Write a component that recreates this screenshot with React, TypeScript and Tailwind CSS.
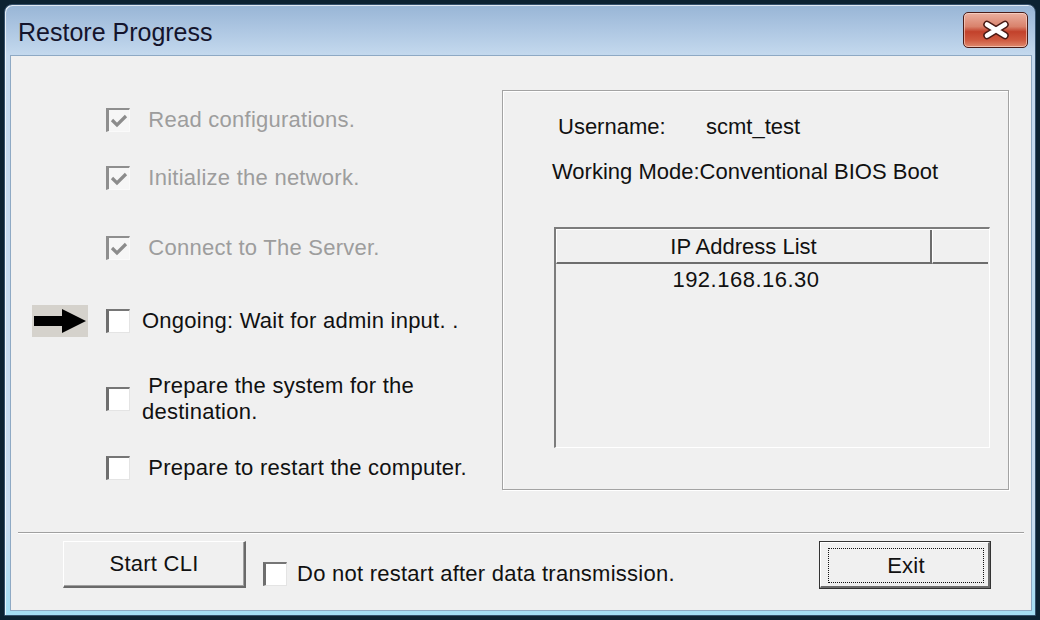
import React from "react";

type BoxProps = { checked?: boolean; disabled?: boolean };

// classic sunken checkbox
const CheckBox: React.FC<BoxProps> = ({ checked, disabled }) => (
  <span
    className={
      disabled
        ? "w-[24px] h-[24px] shrink-0 flex items-center justify-center border-t-2 border-l-[3px] border-r border-b border-t-[#8e8e8e] border-l-[#8e8e8e] border-r-[#fafafa] border-b-[#fafafa] bg-[#f6f6f6]"
        : "w-[24px] h-[24px] shrink-0 flex items-center justify-center border-t-2 border-l-[3px] border-r border-b border-t-[#767676] border-l-[#6e6e6e] border-r-[#e4e4e4] border-b-[#e4e4e4] bg-white"
    }
  >
    {checked && (
      <svg width="18" height="16" viewBox="0 0 18 16">
        <path
          d="M2 7 L7 12 L16 3"
          fill="none"
          stroke={disabled ? "#8c8c8c" : "#222"}
          strokeWidth="3.2"
        />
      </svg>
    )}
  </span>
);

type StepProps = {
  label: string;
  done?: boolean;
};

const Step: React.FC<StepProps> = ({ label, done }) => (
  <div className="flex items-center h-[24px] pl-[95px] gap-[12px]">
    <CheckBox checked={done} disabled={done} />
    <span
      className={
        done
          ? "whitespace-pre text-[22px] leading-[26px] text-[#9d9d9d]"
          : "whitespace-pre text-[22px] leading-[26px] text-[#111]"
      }
    >
      {label}
    </span>
  </div>
);

const CloseButton = () => (
  <div className="self-start mt-[3px] mr-[7px] w-[65px] h-[36px] rounded-[5px] border border-[#4b1d18] bg-[linear-gradient(to_bottom,#eab0a0_0%,#d9826c_40%,#c2412b_55%,#cf5a40_80%,#e08a6e_100%)] shadow-[inset_0_0_0_1px_rgba(255,230,220,0.55)] flex items-center justify-center">
    <svg width="30" height="20" viewBox="0 0 30 20">
      <path d="M6 4.5 L24 15.5 M24 4.5 L6 15.5" stroke="#4a1a14" strokeWidth="7.5" strokeLinecap="round" />
      <path d="M6 4.5 L24 15.5 M24 4.5 L6 15.5" stroke="#ffffff" strokeWidth="4.6" strokeLinecap="round" />
    </svg>
  </div>
);

export default function App() {
  return (
    <div className="w-[1040px] h-[620px] bg-[#0c2232] pl-[4px] pr-[4px] pt-[4px] pb-[4px] font-['Liberation_Sans',Arial,sans-serif]">
      <div className="h-full flex flex-col rounded-t-[8px] border border-[#34506b] bg-[linear-gradient(to_bottom,#98b5d6_0px,#c4d9ee_50px,#c8dcf0_85%,#a4def4_100%)] shadow-[inset_1px_1px_0_rgba(255,255,255,0.7)]">
        {/* title bar */}
        <div className="h-[50px] shrink-0 flex items-center justify-between pt-[4px] pl-[13px]">
          <span className="text-[25px] leading-[30px] text-[#14142c]">Restore Progress</span>
          <CloseButton />
        </div>

        {/* client area */}
        <div className="flex-1 flex flex-col ml-[5px] mr-[3px] mb-[4px] border border-[#8ea9c4] bg-[#f0f0f0] tracking-[0.25px]">
          <div className="flex">
            {/* progress steps */}
            <div className="w-[491px] shrink-0 flex flex-col pt-[52px]">
              <Step label=" Read configurations." done />
              <div className="mt-[34px]">
                <Step label=" Initialize the network." done />
              </div>
              <div className="mt-[46px]">
                <Step label=" Connect to The Server." done />
              </div>
              <div className="mt-[45px] h-[32px] flex items-center pl-[21px]">
                <div className="w-[56px] h-[32px] bg-[#d5d2cc] flex items-center justify-center">
                  <svg width="56" height="32" viewBox="0 0 56 32">
                    <path d="M2 11 H30 V4 L54 16 L30 28 V21 H2 Z" fill="#000" />
                  </svg>
                </div>
                <div className="ml-[18px] flex items-center gap-[12px]">
                  <CheckBox />
                  <span className="whitespace-pre text-[22px] leading-[26px] text-[#111]">
                    Ongoing: Wait for admin input. .
                  </span>
                </div>
              </div>
              <div className="mt-[36px] h-[52px] flex items-center pl-[95px] gap-[12px]">
                <CheckBox />
                <div className="flex flex-col text-[22px] leading-[26px] text-[#111]">
                  <span className="whitespace-pre"> Prepare the system for the</span>
                  <span>destination.</span>
                </div>
              </div>
              <div className="mt-[31px]">
                <Step label=" Prepare to restart the computer." />
              </div>
            </div>

            {/* session info group */}
            <div className="mt-[34px] w-[507px] h-[400px] shrink-0 flex flex-col border border-[#a3a3a3] shadow-[inset_1px_1px_0_#fff,1px_1px_0_#fff] pt-[23px] pl-[49px] text-[22px] leading-[26px] tracking-normal text-[#111]">
              <div className="flex pl-[6px]">
                <span className="w-[148px]">Username:</span>
                <span>scmt_test</span>
              </div>
              <div className="mt-[19px]">Working Mode:Conventional BIOS Boot</div>

              <div className="mt-[42px] ml-[2px] w-[436px] h-[221px] flex flex-col border-t-2 border-l-2 border-r border-b border-t-[#7c7c7c] border-l-[#7c7c7c] border-r-white border-b-white">
                <div className="flex h-[35px] shrink-0 border-t border-white">
                  <div className="w-[376px] pt-[1px] flex items-center justify-center border-l border-white border-r-2 border-r-[#6d6d6d] border-b-2 border-b-[#6d6d6d]">
                    IP Address List
                  </div>
                  <div className="w-[56px] border-l border-white border-b-2 border-b-[#6d6d6d]" />
                </div>
                <div className="w-[376px] mt-[3px] pl-[4px] text-center tracking-[0.5px]">192.168.16.30</div>
              </div>
            </div>
          </div>

          {/* separator */}
          <div className="mt-[42px] mx-[7px] h-[2px] border-t border-t-[#a0a0a0] border-b border-b-white" />

          {/* bottom actions */}
          <div className="mt-[7px] flex items-start pl-[52px] pr-[40px] text-[22px] leading-[26px] text-[#111]">
            <button className="w-[183px] h-[47px] flex items-center justify-center bg-[#f0f0f0] border-t border-l border-t-white border-l-white border-r-2 border-b-2 border-r-[#6a6a6a] border-b-[#6a6a6a] shadow-[inset_-1px_-1px_0_#a0a0a0]">
              Start CLI
            </button>
            <div className="ml-[17px] mt-[20px] flex items-center gap-[10px]">
              <CheckBox />
              <span>Do not restart after data transmission.</span>
            </div>
            <button className="ml-auto w-[172px] h-[48px] flex border border-[#333] bg-[#f0f0f0]">
              <div className="flex-1 flex border-t border-l border-t-white border-l-white border-r-2 border-b-2 border-r-[#6a6a6a] border-b-[#6a6a6a] pt-[5px] pl-[7px] pr-[4px] pb-[3px]">
                <div className="flex-1 flex items-center justify-center border border-dotted border-[#111]">
                  Exit
                </div>
              </div>
            </button>
          </div>
        </div>
      </div>
    </div>
  );
}
